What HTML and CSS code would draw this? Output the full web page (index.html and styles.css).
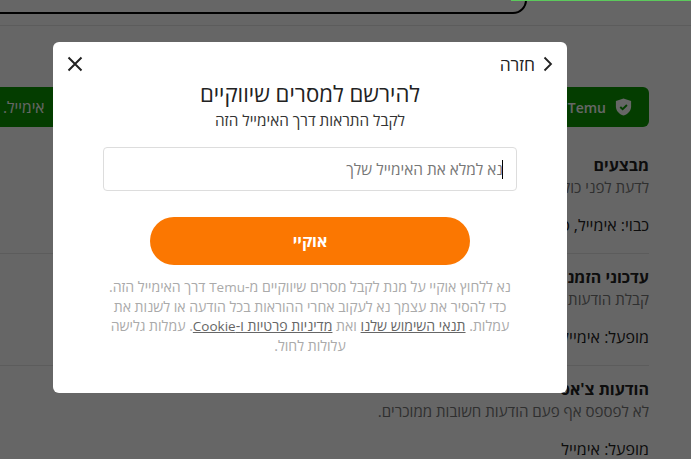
FILE: index.html
```html
<!DOCTYPE html>
<html lang="he" dir="rtl">
<head>
    <meta charset="UTF-8">
    <meta name="viewport" content="width=device-width, initial-scale=1.0">
    <title>Temu</title>
    <link rel="stylesheet" href="styles.css">
</head>
<body>
    <div class="page">
        <div class="top-strip">
            <div class="tab-shape"></div>
        </div>
        <div class="top-divider"></div>
        <div class="content">
            <div class="banner">
                <div class="banner-brand">
                    <svg class="shield" viewBox="0 0 20 20" width="19" height="20" aria-hidden="true">
                        <path d="M10 1 L18 3.6 V9.5 C18 14 14.6 17.6 10 19 C5.4 17.6 2 14 2 9.5 V3.6 Z" fill="#fff"/>
                        <path d="M6.6 10 L9.1 12.4 L13.6 7.9" fill="none" stroke="#0a9a00" stroke-width="2"/>
                    </svg>
                    <span>Temu</span>
                </div>
                <span class="banner-text">אימייל.</span>
            </div>
            <div class="row">
                <h3>מבצעים</h3>
                <p class="row-desc">לדעת לפני כולם על מבצעים והנחות</p>
                <p class="row-state">כבוי: אימייל, סמס</p>
            </div>
            <div class="row">
                <h3>עדכוני הזמנות</h3>
                <p class="row-desc">קבלת הודעות על ההזמנות שלך</p>
                <p class="row-state">מופעל: אימייל</p>
            </div>
            <div class="row">
                <h3>הודעות צ'אט</h3>
                <p class="row-desc">לא לפספס אף פעם הודעות חשובות ממוכרים.</p>
                <p class="row-state">מופעל: אימייל</p>
            </div>
        </div>
    </div>

    <div class="overlay">
        <div class="progress"></div>
        <div class="modal">
            <div class="modal-head">
                <a class="back">
                    <svg viewBox="0 0 10 16" width="10" height="16" aria-hidden="true">
                        <path d="M1.5 1.5 L8 8 L1.5 14.5" fill="none" stroke="#222" stroke-width="1.8"/>
                    </svg>
                    <span>חזרה</span>
                </a>
                <svg class="close" viewBox="0 0 16 16" width="16" height="16" aria-hidden="true">
                    <path d="M1.5 1.5 L14.5 14.5 M14.5 1.5 L1.5 14.5" fill="none" stroke="#222" stroke-width="2"/>
                </svg>
            </div>
            <h2>להירשם למסרים שיווקיים</h2>
            <p class="subtitle">לקבל התראות דרך האימייל הזה</p>
            <div class="field">
                <span class="caret"></span>
                <span class="placeholder">נא למלא את האימייל שלך</span>
            </div>
            <button class="ok">אוקיי</button>
            <p class="legal">נא ללחוץ אוקיי על מנת לקבל מסרים שיווקיים מ-<span class="latin">Temu</span> דרך האימייל הזה. כדי להסיר את עצמך נא לעקוב אחרי ההוראות בכל הודעה או לשנות את עמלות. <a>תנאי השימוש שלנו</a> ואת <a>מדיניות פרטיות ו-<span class="latin">Cookie</span></a>. עמלות גלישה עלולות לחול.</p>
        </div>
    </div>
</body>
</html>
```
FILE: styles.css
```css
html, body {
    margin: 0;
    height: 100%;
    overflow: hidden;
}
body {
    font-family: "Open Sans", "Noto Sans", sans-serif;
    background-color: white;
    color: #222;
}
.page {
    height: 459px;
    overflow: hidden;
}
.top-strip {
    height: 13px;
    position: relative;
}
.tab-shape {
    position: absolute;
    top: -20px;
    left: -20px;
    width: 543px;
    height: 30px;
    border: 2px solid #000;
    border-radius: 0 0 14px 0;
}
.top-divider {
    margin-top: 12px;
    border-top: 1px solid #e6e6e6;
}
.content {
    margin-right: 42px;
    padding-top: 61px;
}
.banner {
    height: 40px;
    background-color: #0a9a00;
    color: white;
    border-radius: 0 6px 6px 0;
    display: flex;
    align-items: center;
    justify-content: space-between;
    padding: 0 16px 0 3px;
    white-space: nowrap;
    margin-bottom: 15px;
}
.banner-brand {
    display: flex;
    align-items: center;
    gap: 8px;
    font-size: 14px;
    font-weight: 600;
}
.banner-text {
    font-size: 15.5px;
}
.row {
    box-sizing: border-box;
    height: 112px;
    padding-top: 13px;
    border-bottom: 1px solid #e6e6e6;
    white-space: nowrap;
}
.row h3 {
    margin: 0;
    font-size: 16px;
    font-weight: 700;
    line-height: 20px;
    color: #222;
}
.row-desc {
    margin: 2px 0 0;
    font-size: 15.1px;
    line-height: 20px;
    color: #777;
}
.row-state {
    margin: 18px 0 0;
    font-size: 16px;
    line-height: 20px;
    color: #222;
}
.overlay {
    position: fixed;
    inset: 0;
    background-color: rgba(0,0,0,0.6);
}
.progress {
    position: absolute;
    top: 0;
    left: 511px;
    right: 0;
    height: 1px;
    background-color: #5cc95c;
}
.modal {
    position: absolute;
    top: 42px;
    left: 53px;
    width: 514px;
    height: 351px;
    box-sizing: border-box;
    background-color: white;
    border-radius: 6px;
    padding: 0 50px;
    text-align: center;
}
.modal-head {
    display: flex;
    justify-content: space-between;
    align-items: center;
    height: 44px;
    margin: 0 -36px;
}
.back {
    display: flex;
    align-items: center;
    gap: 8px;
    font-size: 17.5px;
    color: #222;
}
.modal h2 {
    margin: -6px 0 0;
    font-size: 22.2px;
    font-weight: 500;
    line-height: 28px;
    color: #222;
}
.subtitle {
    margin: 2px 0 0;
    font-size: 15.3px;
    line-height: 20px;
    color: #333;
}
.field {
    margin-top: 17px;
    height: 42px;
    border: 1px solid #ddd;
    border-radius: 4px;
    display: flex;
    align-items: center;
    padding-right: 13px;
    font-size: 15.4px;
    color: #777;
}
.caret {
    width: 1px;
    height: 19px;
    background-color: #000;
    margin-left: -1px;
}
.ok {
    display: block;
    width: 320px;
    height: 48px;
    margin: 26px auto 0;
    border: none;
    border-radius: 24px;
    background-color: #fb7701;
    color: white;
    font-family: inherit;
    font-size: 16px;
    font-weight: 700;
}
.legal {
    margin: 12px 0 0;
    font-size: 14.1px;
    line-height: 19px;
    color: #aaa;
}
.legal a {
    color: #666;
    text-decoration: underline;
}
.latin {
    font-size: 13.5px;
}
```
